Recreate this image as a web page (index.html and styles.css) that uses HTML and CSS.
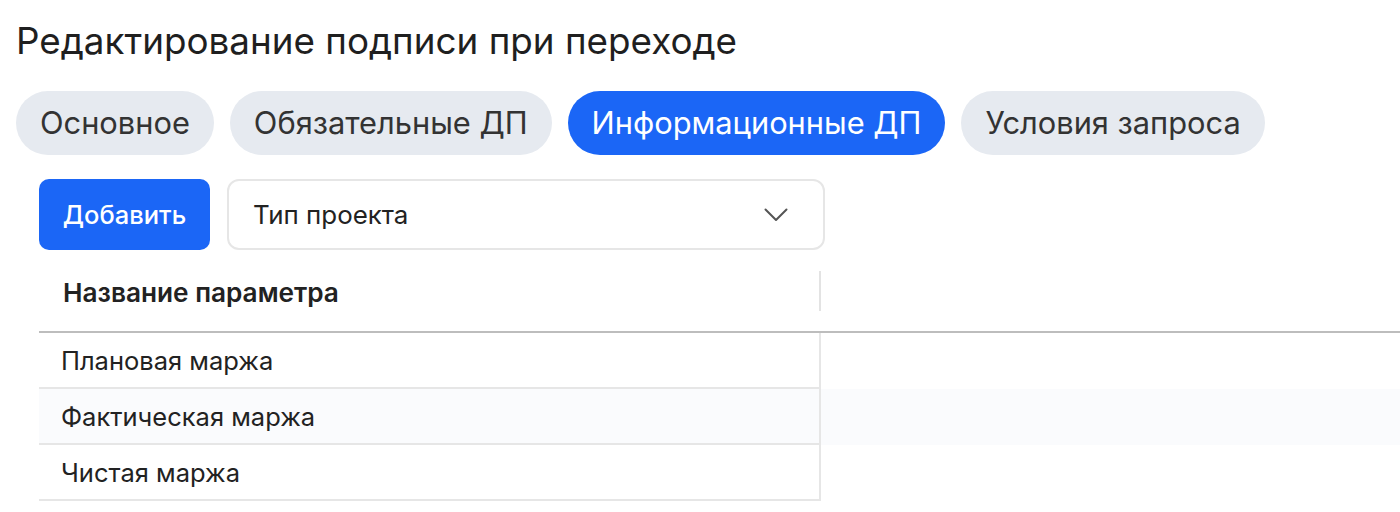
FILE: index.html
```html
<!DOCTYPE html>
<html lang="ru">
<head>
<meta charset="utf-8">
<title>Редактирование подписи при переходе</title>
<link rel="stylesheet" href="styles.css">
</head>
<body>
<div class="page">
  <h1 class="title">Редактирование подписи при переходе</h1>
  <div class="tabs">
    <div class="tab">Основное</div>
    <div class="tab">Обязательные ДП</div>
    <div class="tab tab-active">Информационные ДП</div>
    <div class="tab">Условия запроса</div>
  </div>
  <div class="content">
    <div class="toolbar">
      <button class="btn-add">Добавить</button>
      <div class="select">
        <span class="select-text">Тип проекта</span>
        <svg class="chevron" width="24" height="14" viewBox="0 0 24 14"><polyline points="1.5,1.5 12,12 22.5,1.5" fill="none" stroke="#555" stroke-width="2" stroke-linecap="round" stroke-linejoin="round"/></svg>
      </div>
    </div>
    <div class="table">
      <div class="thead">
        <div class="th">Название параметра</div>
        <div class="th-rest"></div>
      </div>
      <div class="tr">
        <div class="td">Плановая маржа</div>
        <div class="td-rest"></div>
      </div>
      <div class="tr tr-alt">
        <div class="td">Фактическая маржа</div>
        <div class="td-rest"></div>
      </div>
      <div class="tr">
        <div class="td">Чистая маржа</div>
        <div class="td-rest"></div>
      </div>
    </div>
  </div>
</div>
</body>
</html>
```

FILE: styles.css
```css
* { box-sizing: border-box; }
html, body { margin: 0; padding: 0; background: #fff; }
body {
  font-family: Inter, "Noto Sans", "DejaVu Sans", sans-serif;
  color: #222;
  overflow: hidden;
}
.page { padding-left: 16px; }
.title {
  margin: 0;
  padding-top: 19px;
  font-size: 36.8px;
  line-height: 44px;
  font-weight: 400;
  color: #1f1f1f;
}
.tabs {
  display: flex;
  gap: 16px;
  margin-top: 28px;
}
.tab {
  height: 64px;
  line-height: 64px;
  padding: 0 24px;
  border-radius: 32px;
  background: #e6eaf0;
  color: #333;
  font-size: 30.8px;
  white-space: nowrap;
}
.tab-active { background: #1b66f6; color: #fff; }
.content { padding-left: 23px; }
.toolbar {
  display: flex;
  gap: 17px;
  margin-top: 24px;
  height: 71px;
}
.btn-add {
  width: 171px;
  height: 71px;
  border: none;
  border-radius: 10px;
  background: #1b66f6;
  color: #fff;
  font-family: inherit;
  font-size: 25.5px;
  font-weight: 500;
  padding: 0;
}
.select {
  width: 598px;
  height: 71px;
  border: 2px solid #e6e6e6;
  border-radius: 12px;
  display: flex;
  align-items: center;
  justify-content: space-between;
  padding: 0 35px 0 24px;
}
.select-text { font-size: 25.9px; color: #222; }
.chevron { display: block; }
.table { margin-top: 1px; }
.thead {
  display: flex;
  height: 82px;
  border-bottom: 2px solid #bdbdbd;
}
.th {
  position: relative;
  width: 782px;
  padding-left: 24px;
  padding-top: 2px;
  line-height: 80px;
  font-size: 26.2px;
  font-weight: 600;
  color: #222;
}
.th::after {
  content: "";
  position: absolute;
  right: 0;
  top: 20px;
  width: 2px;
  height: 40px;
  background: #e3e3e3;
}
.th-rest, .td-rest { flex: 1; }
.tr { display: flex; }
.tr-alt { background: #fafbfd; }
.td {
  width: 782px;
  height: 56px;
  padding-left: 22px;
  padding-top: 2px;
  line-height: 52px;
  font-size: 25.5px;
  color: #222;
  border-right: 2px solid #e6e6e6;
  border-bottom: 2px solid #e6e6e6;
}
```
